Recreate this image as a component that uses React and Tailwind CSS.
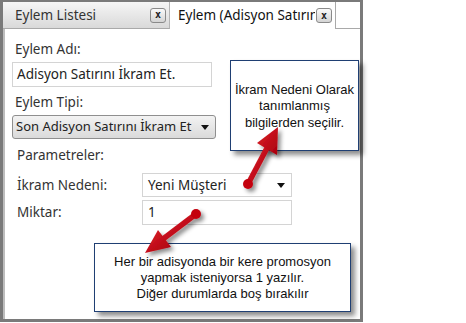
export default function App() {
  const ui = { fontFamily: '"Noto Sans", "Open Sans", sans-serif' };
  const note = { fontFamily: '"Liberation Sans", Arial, sans-serif' };

  return (
    <div className="relative w-[466px] h-[323px] bg-white overflow-hidden text-[#222]" style={ui}>
      {/* Window */}
      <div className="w-[363px] h-[322px] border-l-[3px] border-r-[3px] border-t-2 border-b-[3px] border-[#7a7a7a] flex flex-col">
        {/* Tabs */}
        <div className="flex h-[27px] shrink-0">
          <div className="w-[167px] flex items-center justify-between pl-[12px] pr-[3px] bg-gradient-to-b from-[#f6f6f6] to-[#d9d9d9] border-b border-[#a9a9a9] border-r border-r-[#b5b5b5]">
            <span className="text-[13.5px] text-[#333]">Eylem Listesi</span>
            <CloseBtn />
          </div>
          <div className="w-[165px] flex items-center justify-between pl-[8px] pr-[3px] bg-white">
            <span className="text-[13.5px] text-[#111] whitespace-nowrap overflow-hidden w-[137px]">Eylem (Adisyon Satırını</span>
            <CloseBtn />
          </div>
          <div className="flex-1 border-l border-b border-[#a9a9a9] bg-white" />
        </div>

        {/* Content */}
        <div className="flex-1 border-l-2 border-[#bdbdbd] bg-white pl-[7px] pt-[11px] text-[13.5px] text-[#333]">
          <div className="pl-[3px] leading-[18px]">Eylem Adı:</div>
          <div className="mt-[4px] w-[200px] h-[25px] border border-[#d4d4d4] flex items-center pl-[4px] text-[#222]">
            Adisyon Satırını İkram Et.
          </div>
          <div className="pl-[3px] mt-[6px] leading-[18px]">Eylem Tipi:</div>
          <div className="mt-[4px] w-[204px] h-[24px] rounded-[3px] border border-[#8f8f8f] bg-gradient-to-b from-[#f3f3f3] to-[#dadada] flex items-center justify-between pl-[3px] pr-[6px] text-[#222]">
            <span className="whitespace-nowrap text-[13px]">Son Adisyon Satırını İkram Et</span>
            <Tri />
          </div>
          <div className="pl-[5px] mt-[7px] leading-[18px]">Parametreler:</div>
          <div className="flex items-center mt-[9px]">
            <div className="w-[130px] pl-[5px]">İkram Nedeni:</div>
            <div className="w-[150px] h-[24px] border border-[#d4d4d4] flex items-center justify-between pl-[5px] pr-[6px] text-[#222]">
              <span>Yeni Müşteri</span>
              <Tri />
            </div>
          </div>
          <div className="flex items-center mt-[3px]">
            <div className="w-[130px] pl-[5px]">Miktar:</div>
            <div className="w-[150px] h-[25px] border border-[#d4d4d4] flex items-center pl-[5px] text-[#222]">1</div>
          </div>
        </div>
      </div>

      {/* Callout 1 */}
      <div
        className="absolute left-[230px] top-[60px] w-[129px] h-[91px] bg-white border-[1.5px] border-[#1f3f73] shadow-[4px_4px_5px_rgba(0,0,0,0.45)] flex flex-col items-center justify-center pt-[2px] text-[13px] leading-[16.5px] text-[#111]"
        style={note}
      >
        <span>İkram Nedeni Olarak</span>
        <span>tanımlanmış</span>
        <span>bilgilerden seçilir.</span>
      </div>

      {/* Callout 2 */}
      <div
        className="absolute left-[94px] top-[243px] w-[257px] h-[69px] bg-white border-[1.5px] border-[#1f3f73] shadow-[4px_4px_5px_rgba(0,0,0,0.45)] flex flex-col items-center justify-center text-[13px] leading-[16px] text-[#111]"
        style={note}
      >
        <span>Her bir adisyonda bir kere promosyon</span>
        <span>yapmak isteniyorsa 1 yazılır.</span>
        <span>Diğer durumlarda boş bırakılır</span>
      </div>

      {/* Arrows */}
      <svg className="absolute left-0 top-0 pointer-events-none" width="466" height="323" viewBox="0 0 466 323">
        <defs>
          <filter id="sh" x="-30%" y="-30%" width="160%" height="160%">
            <feDropShadow dx="3" dy="3" stdDeviation="2" floodColor="#000" floodOpacity="0.45" />
          </filter>
          <linearGradient id="rd" x1="0" y1="0" x2="1" y2="1">
            <stop offset="0" stopColor="#e0202a" />
            <stop offset="1" stopColor="#a8000c" />
          </linearGradient>
        </defs>
        <g filter="url(#sh)">
          <line x1="248" y1="184" x2="267" y2="148" stroke="url(#rd)" strokeWidth="5.5" />
          <circle cx="248" cy="184" r="5" fill="#c4000f" />
          <polygon points="278,127 257,143 277,155" fill="url(#rd)" />
        </g>
        <g filter="url(#sh)">
          <line x1="196" y1="214" x2="163" y2="239" stroke="url(#rd)" strokeWidth="5.5" />
          <circle cx="196" cy="214" r="5" fill="#c4000f" />
          <polygon points="145,253 158,230 171,247" fill="url(#rd)" />
        </g>
      </svg>
    </div>
  );
}

function CloseBtn() {
  return (
    <div
      className="w-[16px] h-[15px] rounded-[3px] border border-[#8a8a8a] bg-gradient-to-b from-[#fafafa] to-[#d4d4d4] flex items-center justify-center text-[10px] font-bold leading-none text-[#222]"
      style={{ fontFamily: '"DejaVu Sans Mono", monospace' }}
    >
      x
    </div>
  );
}

function Tri() {
  return (
    <svg width="8" height="5" viewBox="0 0 8 5" className="shrink-0">
      <polygon points="0,0 8,0 4,5" fill="#111" />
    </svg>
  );
}
